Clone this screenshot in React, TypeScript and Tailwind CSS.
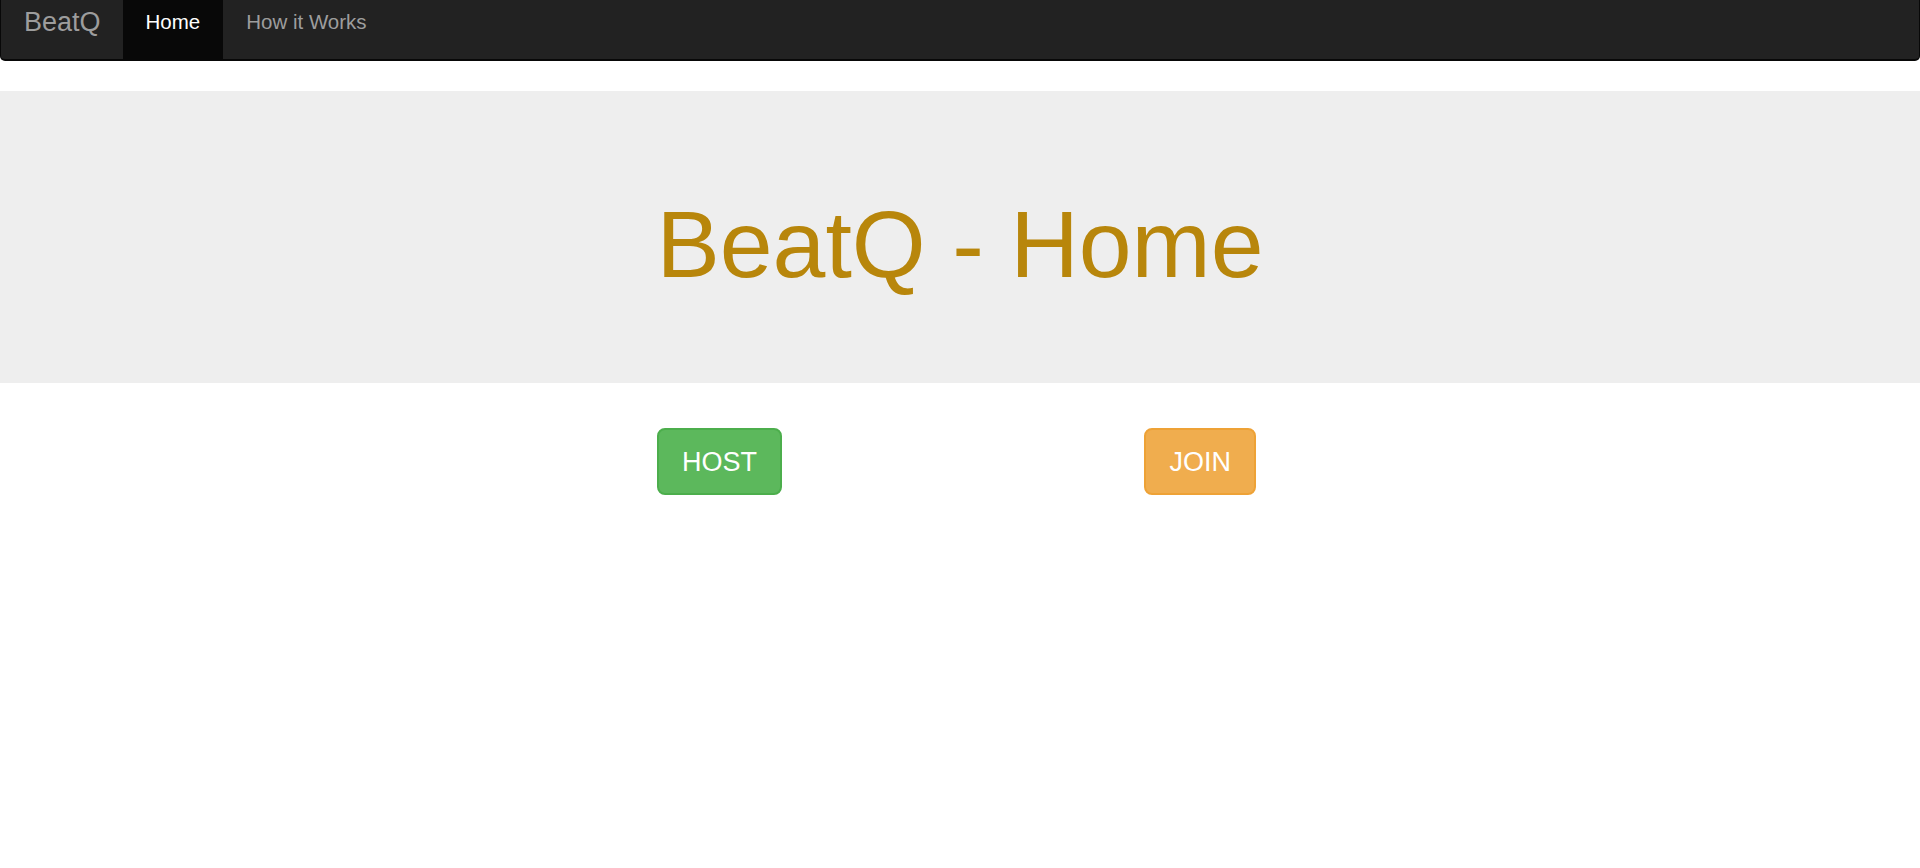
import React from "react";

export default function App() {
  return (
    <div className="min-h-[868px] w-full bg-white" style={{ fontFamily: '"Liberation Sans", Arial, sans-serif' }}>
      <nav className="flex h-[61px] items-start rounded-b-[5px] border-x border-b-2 border-[#080808] bg-[#222222]">
        <a className="block h-[59px] pl-[23px] pr-[22px] pt-[9px] text-[27px] leading-[27px] text-[#9d9d9d]">BeatQ</a>
        <a className="block h-[59px] bg-[#080808] px-[23px] pt-[8px] text-[20.5px] leading-[28px] text-white">Home</a>
        <a className="block h-[59px] px-[23px] pt-[8px] text-[20.5px] leading-[28px] text-[#9d9d9d]">How it Works</a>
      </nav>
      <div className="mt-[30px] flex h-[292px] justify-center bg-[#eeeeee] pt-[101px]">
        <h1 className="text-[95px] font-normal leading-[1.1] text-[#b8860b]">BeatQ - Home</h1>
      </div>
      <div className="mt-[45px] flex justify-center">
        <div className="mr-[7px] flex w-[599px] justify-between">
          <button className="h-[67px] rounded-[8px] border-2 border-[#4cae4c] bg-[#5cb85c] px-[23px] text-[27px] leading-[34px] text-white">
            HOST
          </button>
          <button className="h-[67px] rounded-[8px] border-2 border-[#eea236] bg-[#f0ad4e] px-[23px] text-[27px] leading-[34px] text-white">
            JOIN
          </button>
        </div>
      </div>
    </div>
  );
}
